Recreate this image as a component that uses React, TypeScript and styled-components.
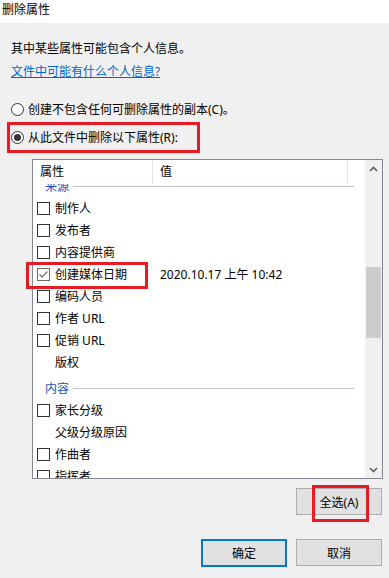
import styled, { createGlobalStyle } from "styled-components";

const GlobalStyle = createGlobalStyle`
  html, body {
    margin: 0;
    padding: 0;
    background: #f0f0f0;
  }
  body {
    font-family: "Noto Sans", "Noto Sans CJK SC", sans-serif;
    font-size: 12px;
    color: #000;
  }
`;

// Ventana del cuadro de diálogo
const Dialog = styled.div`
  width: 389px;
  height: 578px;
  background: #f0f0f0;
  display: flex;
  flex-direction: column;
  overflow: hidden;
`;

const TitleBar = styled.div`
  height: 23px;
  flex-shrink: 0;
  background: #ffffff;
  padding-left: 2px;
  line-height: 20px;
  font-size: 12px;
`;

const Content = styled.div`
  display: flex;
  flex-direction: column;
  padding: 14px 7px 0 11px;
`;

const TextLine = styled.div`
  line-height: 23px;
  white-space: nowrap;
`;

const HelpLink = styled.a`
  color: #0066cc;
  text-decoration: underline;
  cursor: pointer;
`;

const RadioGroup = styled.div`
  display: flex;
  flex-direction: column;
  margin-top: 12px;
`;

const RadioRow = styled.label`
  display: flex;
  align-items: center;
  gap: 4px;
  height: 28px;
  white-space: nowrap;
`;

const RadioCircle = styled.span<{ $checked?: boolean }>`
  box-sizing: border-box;
  width: 13px;
  height: 13px;
  border-radius: 50%;
  border: 1px solid #333333;
  background: #ffffff;
  display: flex;
  align-items: center;
  justify-content: center;
  flex-shrink: 0;
  &::after {
    content: "";
    width: 7px;
    height: 7px;
    border-radius: 50%;
    background: ${(p) => (p.$checked ? "#333333" : "transparent")};
  }
`;

// Marco rojo de anotación encima del contenido
const Marked = styled.div<{ $l: number; $t: number; $w: number; $h: number }>`
  position: relative;
  display: flex;
  &::after {
    content: "";
    position: absolute;
    left: ${(p) => p.$l}px;
    top: ${(p) => p.$t}px;
    width: ${(p) => p.$w}px;
    height: ${(p) => p.$h}px;
    box-sizing: border-box;
    border: 3px solid #e81a24;
    pointer-events: none;
    z-index: 2;
  }
`;

const ListBox = styled.div`
  box-sizing: border-box;
  margin: 8px 0 0 21px;
  width: 351px;
  height: 320px;
  border: 1px solid #828790;
  background: #ffffff;
  display: flex;
`;

const ListMain = styled.div`
  flex: 1;
  min-width: 0;
  min-height: 0;
  display: flex;
  flex-direction: column;
`;

const Header = styled.div`
  height: 24px;
  flex-shrink: 0;
  display: flex;
  background: #ffffff;
  position: relative;
  z-index: 1;
`;

const HeaderCell = styled.div<{ $width: number }>`
  box-sizing: border-box;
  width: ${(p) => p.$width}px;
  padding-left: 7px;
  line-height: 24px;
  border-right: 1px solid #e5e5e5;
`;

const Rows = styled.div`
  flex: 1;
  min-height: 0;
  clip-path: inset(0 -12px 0 -12px);
`;

const RowsInner = styled.div`
  margin-top: -13px;
`;

const GroupRow = styled.div`
  box-sizing: border-box;
  height: 26px;
  padding: 4px 11px 0 12px;
  display: flex;
  align-items: center;
`;

const GroupLabel = styled.span`
  color: #1f4fbf;
  white-space: nowrap;
`;

const GroupRule = styled.span`
  flex: 1;
  height: 1px;
  margin-left: 4px;
  background: #bcc2d9;
`;

const ItemRow = styled.div`
  height: 22px;
  display: flex;
  align-items: center;
  white-space: nowrap;
`;

const NameCell = styled.div`
  box-sizing: border-box;
  width: 127px;
  padding-left: 4px;
  display: flex;
  align-items: center;
  gap: 5px;
`;

const CheckBox = styled.span<{ $checked?: boolean }>`
  box-sizing: border-box;
  width: 13px;
  height: 13px;
  flex-shrink: 0;
  border: 1px solid ${(p) => (p.$checked ? "#6b6b6b" : "#333333")};
  background: #ffffff;
  display: flex;
  align-items: center;
  justify-content: center;
`;

const NoBox = styled.span`
  width: 13px;
  flex-shrink: 0;
`;

const ValueCell = styled.div`
  flex: 1;
`;

const MarkedRowBody = styled.div`
  flex: 1;
`;

const ScrollBar = styled.div`
  width: 17px;
  flex-shrink: 0;
  background: #f0f0f0;
  display: flex;
  flex-direction: column;
`;

const ArrowButton = styled.div`
  height: 17px;
  display: flex;
  align-items: center;
  justify-content: center;
`;

const Track = styled.div`
  flex: 1;
`;

const Thumb = styled.div`
  margin-left: 1px;
  width: 15px;
  background: #cdcdcd;
`;

const ButtonBar = styled.div<{ $top: number }>`
  display: flex;
  justify-content: flex-end;
  gap: 9px;
  margin-top: ${(p) => p.$top}px;
`;

const DialogButton = styled.button<{ $primary?: boolean }>`
  box-sizing: border-box;
  width: 86px;
  height: ${(p) => (p.$primary ? 28 : 27)}px;
  padding: 0;
  background: #e1e1e1;
  border: ${(p) => (p.$primary ? "2px solid #0078d7" : "1px solid #adadad")};
  font-family: inherit;
  font-size: 12px;
  color: #000;
`;

type Item =
  | { kind: "group"; label: string }
  | { kind: "item"; label: string; box: boolean; checked?: boolean; value?: string; marked?: boolean };

const items: Item[] = [
  { kind: "group", label: "来源" },
  { kind: "item", label: "制作人", box: true },
  { kind: "item", label: "发布者", box: true },
  { kind: "item", label: "内容提供商", box: true },
  { kind: "item", label: "创建媒体日期", box: true, checked: true, value: "2020.10.17 上午 10:42", marked: true },
  { kind: "item", label: "编码人员", box: true },
  { kind: "item", label: "作者 URL", box: true },
  { kind: "item", label: "促销 URL", box: true },
  { kind: "item", label: "版权", box: false },
  { kind: "group", label: "内容" },
  { kind: "item", label: "家长分级", box: true },
  { kind: "item", label: "父级分级原因", box: false },
  { kind: "item", label: "作曲者", box: true },
  { kind: "item", label: "指挥者", box: true },
];

const Chevron = ({ up }: { up?: boolean }) => (
  <svg width="9" height="6" viewBox="0 0 9 6">
    <polyline
      points={up ? "1,5 4.5,1.5 8,5" : "1,1 4.5,4.5 8,1"}
      fill="none"
      stroke="#606060"
      strokeWidth="1.6"
    />
  </svg>
);

const CheckMark = () => (
  <svg width="11" height="11" viewBox="0 0 11 11">
    <polyline points="1.5,5.5 4,8 9.5,2.5" fill="none" stroke="#6b6b6b" strokeWidth="1.2" />
  </svg>
);

const ItemLine = ({ item }: { item: Extract<Item, { kind: "item" }> }) => (
  <ItemRow>
    <NameCell>
      {item.box ? <CheckBox $checked={item.checked}>{item.checked && <CheckMark />}</CheckBox> : <NoBox />}
      <span>{item.label}</span>
    </NameCell>
    <ValueCell>{item.value}</ValueCell>
  </ItemRow>
);

const App = () => {
  return (
    <Dialog>
      <GlobalStyle />
      <TitleBar>删除属性</TitleBar>
      <Content>
        <TextLine>其中某些属性可能包含个人信息。</TextLine>
        <TextLine>
          <HelpLink>文件中可能有什么个人信息?</HelpLink>
        </TextLine>

        <RadioGroup>
          <RadioRow>
            <RadioCircle />
            创建不包含任何可删除属性的副本(C)。
          </RadioRow>
          <Marked $l={-4} $t={-1} $w={193} $h={31}>
            <RadioRow>
              <RadioCircle $checked />
              从此文件中删除以下属性(R):
            </RadioRow>
          </Marked>
        </RadioGroup>

        <ListBox>
          <ListMain>
            <Header>
              <HeaderCell $width={120}>属性</HeaderCell>
              <HeaderCell $width={195}>值</HeaderCell>
            </Header>
            <Rows>
              <RowsInner>
                {items.map((item, i) =>
                  item.kind === "group" ? (
                    <GroupRow key={i}>
                      <GroupLabel>{item.label}</GroupLabel>
                      <GroupRule />
                    </GroupRow>
                  ) : item.marked ? (
                    <Marked key={i} $l={-7} $t={-1} $w={122} $h={27}>
                      <MarkedRowBody>
                        <ItemLine item={item} />
                      </MarkedRowBody>
                    </Marked>
                  ) : (
                    <ItemLine key={i} item={item} />
                  )
                )}
              </RowsInner>
            </Rows>
          </ListMain>
          <ScrollBar>
            <ArrowButton>
              <Chevron up />
            </ArrowButton>
            <Track>
              <Thumb style={{ marginTop: 90, height: 71 }} />
            </Track>
            <ArrowButton>
              <Chevron />
            </ArrowButton>
          </ScrollBar>
        </ListBox>

        <ButtonBar $top={9}>
          <Marked $l={16} $t={-3} $w={57} $h={37}>
            <DialogButton>全选(A)</DialogButton>
          </Marked>
        </ButtonBar>

        <ButtonBar $top={24}>
          <DialogButton $primary>确定</DialogButton>
          <DialogButton>取消</DialogButton>
        </ButtonBar>
      </Content>
    </Dialog>
  );
};

export default App;
